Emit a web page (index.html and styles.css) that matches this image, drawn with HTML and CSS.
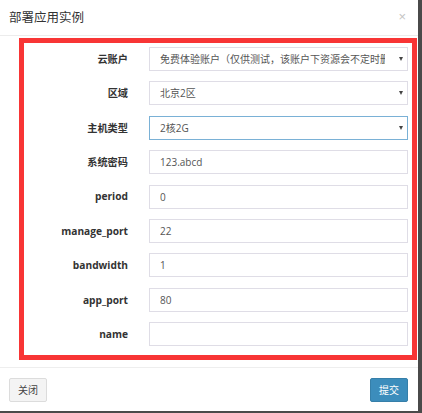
FILE: index.html
```html
<!DOCTYPE html>
<html lang="zh-CN">
<head>
<meta charset="utf-8">
<title>部署应用实例</title>
<link rel="stylesheet" href="styles.css">
</head>
<body>
<div class="modal">
  <div class="modal-header">
    <h4 class="modal-title">部署应用实例</h4>
    <span class="close">×</span>
  </div>
  <div class="modal-body">
    <form class="form-box">
      <label class="lbl">云账户</label>
      <span class="sel"><select class="ctl"><option>免费体验账户（仅供测试，该账户下资源会不定时删除）</option></select></span>
      <label class="lbl">区域</label>
      <span class="sel"><select class="ctl"><option>北京2区</option></select></span>
      <label class="lbl">主机类型</label>
      <span class="sel"><select class="ctl focus"><option>2核2G</option></select></span>
      <label class="lbl">系统密码</label>
      <input class="ctl" type="text" value="123.abcd">
      <label class="lbl">period</label>
      <input class="ctl" type="text" value="0">
      <label class="lbl">manage_port</label>
      <input class="ctl" type="text" value="22">
      <label class="lbl">bandwidth</label>
      <input class="ctl" type="text" value="1">
      <label class="lbl">app_port</label>
      <input class="ctl" type="text" value="80">
      <label class="lbl">name</label>
      <input class="ctl" type="text" value="">
    </form>
  </div>
  <div class="modal-footer">
    <button class="btn btn-default" type="button">关闭</button>
    <button class="btn btn-primary" type="button">提交</button>
  </div>
</div>
</body>
</html>
```

FILE: styles.css
```css
* { box-sizing: border-box; }
html, body { margin: 0; padding: 0; }
body {
  background: #4a4a4a;
  width: 422px;
  height: 413px;
  overflow: hidden;
  font-family: "Open Sans", "Noto Sans CJK SC", sans-serif;
}
.modal {
  width: 418px;
  height: 411px;
  background: #fff;
  display: flex;
  flex-direction: column;
}
.modal-header {
  height: 36px;
  border-bottom: 1px solid #ececec;
  display: flex;
  align-items: center;
  justify-content: space-between;
  padding: 0 12px 0 9px;
}
.modal-title {
  margin: 0;
  font-size: 12.5px;
  font-weight: normal;
  color: #333;
  font-family: "Noto Sans CJK SC", sans-serif;
  line-height: 1;
  margin-top: 0px;
}
.close {
  font-size: 13px;
  color: #c4c4c4;
  line-height: 1;
  font-family: "Liberation Sans", sans-serif;
  margin-top: -2px;
}
.modal-body {
  padding: 2px 1px 0 19px;
}
.form-box {
  margin: 0;
  height: 322px;
  border: 5px solid #f83535;
  padding: 4px 4px 0 0;
  display: grid;
  grid-template-columns: 104px 259px;
  column-gap: 21px;
  row-gap: 10.375px;
  grid-auto-rows: 24px;
  align-items: center;
}
.lbl {
  text-align: right;
  font-weight: bold;
  font-size: 10.2px;
  color: #333;
  line-height: 1;
}
.ctl {
  display: block;
  width: 259px;
  height: 24px;
  border: 1px solid #dfdde6;
  border-radius: 0;
  background: #fff;
  padding: 0 10px;
  font-family: "Open Sans", "Noto Sans CJK SC", sans-serif;
  font-size: 10px;
  color: #555;
  margin: 0;
  outline: none;
}
select.ctl {
  -webkit-appearance: none;
  appearance: none;
  padding-right: 22px;
}
.ctl.focus { border-color: #7ab1d6; }
.sel {
  position: relative;
  display: block;
  height: 24px;
}
.sel::after {
  content: "";
  position: absolute;
  right: 5px;
  top: 10px;
  border-left: 2.5px solid transparent;
  border-right: 2.5px solid transparent;
  border-top: 4px solid #444;
}
.modal-footer {
  margin-top: 7px;
  border-top: 1px solid #eeeeee;
  padding: 10px 10px 0 9px;
  display: flex;
  justify-content: space-between;
}
.btn {
  width: 38px;
  height: 24px;
  font-family: "Noto Sans CJK SC", sans-serif;
  font-size: 10px;
  border-radius: 2px;
  padding: 0;
  line-height: 1;
}
.btn-default {
  background: #f4f4f4;
  border: 1px solid #dcdcdc;
  color: #444;
}
.btn-primary {
  background: #3c8dbc;
  border: 1px solid #367fa9;
  color: #fff;
}
```
